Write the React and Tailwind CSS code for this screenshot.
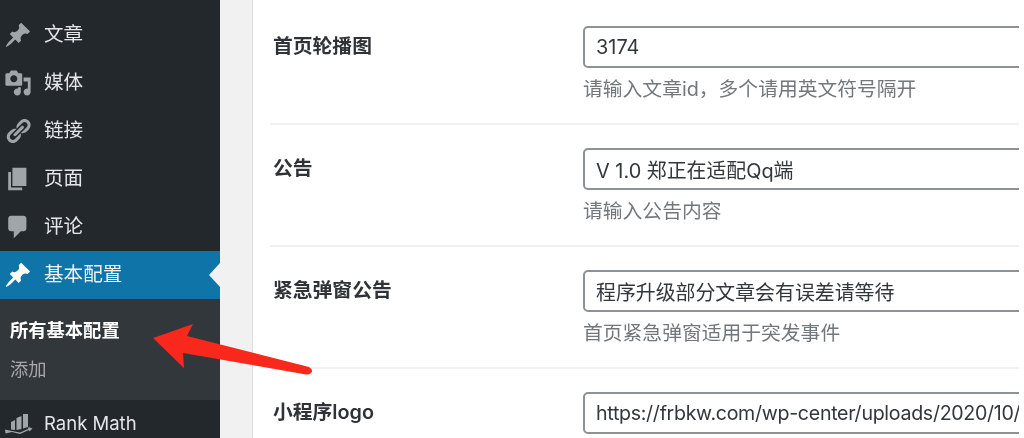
import React from 'react';

const PinIcon = ({ className }) => (
  <svg viewBox="0 0 20 20" fill="currentColor" className={className}>
    <path d="M10.44 3.02l1.82-1.82 6.36 6.35-1.83 1.82c-1.05-.68-2.48-.57-3.41.36l-.75.75c-.92.93-1.04 2.35-.35 3.41l-1.83 1.82-2.41-2.41-2.8 2.79c-.42.42-3.38 2.71-3.8 2.29s1.86-3.39 2.28-3.81l2.79-2.79L4.1 9.36l1.83-1.82c1.05.69 2.48.57 3.4-.36l.75-.75c.93-.92 1.04-2.35.36-3.41z" />
  </svg>
);

const MediaIcon = ({ className }) => (
  <svg viewBox="0 0 20 20" fill="currentColor" className={className}>
    <path d="M13 11V4c0-.55-.45-1-1-1h-1.67L9 1H5L3.67 3H2c-.55 0-1 .45-1 1v7c0 .55.45 1 1 1h10c.55 0 1-.45 1-1zM7 4.5c1.38 0 2.5 1.12 2.5 2.5S8.38 9.5 7 9.5 4.5 8.38 4.5 7 5.62 4.5 7 4.5zM14 6h5v10.5c0 1.38-1.12 2.5-2.5 2.5S14 17.88 14 16.5s1.12-2.5 2.5-2.5c.17 0 .34.02.5.05V9h-3V6zm-4 8.05V13h2v3.5c0 1.38-1.12 2.5-2.5 2.5S7 17.88 7 16.5 8.12 14 9.5 14c.17 0 .34.02.5.05z" />
  </svg>
);

const LinkIcon = ({ className }) => (
  <svg viewBox="0 0 20 20" fill="currentColor" className={className}>
    <path d="M17.74 2.76c1.68 1.69 1.68 4.41 0 6.1l-1.53 1.52c-1.12 1.12-2.7 1.47-4.14 1.09l2.62-2.61.76-.77.76-.76c.84-.84.84-2.2 0-3.04-.84-.85-2.2-.85-3.04 0l-.77.76-3.38 3.38c-.37-1.44-.02-3.02 1.1-4.14l1.52-1.53c1.69-1.68 4.42-1.68 6.1 0zM8.59 13.43l5.34-5.34c.42-.42.42-1.1 0-1.52-.44-.43-1.13-.39-1.53 0l-5.33 5.34c-.42.42-.42 1.1 0 1.52.44.43 1.13.39 1.52 0zm-.76 2.29l4.14-4.15c.38 1.44.03 3.02-1.09 4.14l-1.52 1.53c-1.69 1.68-4.41 1.68-6.1 0-1.68-1.68-1.68-4.42 0-6.1l1.53-1.52c1.12-1.12 2.7-1.47 4.14-1.1l-4.14 4.15c-.85.84-.85 2.2 0 3.05.84.84 2.2.84 3.04 0z" />
  </svg>
);

const PageIcon = ({ className }) => (
  <svg viewBox="0 0 20 20" fill="currentColor" className={className}>
    <path d="M6 15V2h10v13H6zm-1 1h8v2H3V5h2v11z" />
  </svg>
);

const CommentIcon = ({ className }) => (
  <svg viewBox="0 0 20 20" fill="currentColor" className={className}>
    <path d="M5 2h9c1.1 0 2 .9 2 2v7c0 1.1-.9 2-2 2h-2l-5 5v-5H5c-1.1 0-2-.9-2-2V4c0-1.1.9-2 2-2z" />
  </svg>
);

const RankMathIcon = ({ className }) => (
  <svg viewBox="0 0 28 20" fill="currentColor" className={className}>
    <path d="M18 0h5v13l-5 1.5zM11.500 4l5-2v13l-5 1zM6 8l4-2v10l-4-.5z" />
    <path d="M0 15.500l7 1.500 8 1.500 8-3.500 .5-2 4 1.500-3 3-.5-1.500-9 4-8-2-6.500 1.500z" />
  </svg>
);

const menuItems = [
  { label: '文章', Icon: PinIcon },
  { label: '媒体', Icon: MediaIcon },
  { label: '链接', Icon: LinkIcon },
  { label: '页面', Icon: PageIcon },
  { label: '评论', Icon: CommentIcon },
];

const fields = [
  { label: '首页轮播图', value: '3174', help: '请输入文章id，多个请用英文符号隔开' },
  { label: '公告', value: 'V 1.0 郑正在适配Qq端', help: '请输入公告内容' },
  { label: '紧急弹窗公告', value: '程序升级部分文章会有误差请等待', help: '首页紧急弹窗适用于突发事件' },
  { label: '小程序logo', value: 'https://frbkw.com/wp-center/uploads/2020/10/', tight: true },
];

const MenuItem = ({ label, Icon }) => (
  <div className="flex h-[48px] items-center text-[#e4e6e7]">
    <div className="ml-[4px] w-[40px] text-[#a0a5aa]">
      <Icon className="h-[28px] w-[28px]" />
    </div>
    <span className="text-[19.6px]">{label}</span>
  </div>
);

const Sidebar = () => (
  <aside className="w-[220px] shrink-0 bg-[#23282d] pt-[11px]">
    {menuItems.map((item) => (
      <MenuItem key={item.label} {...item} />
    ))}
    <div className="relative flex h-[48px] items-center bg-[#0f74a8] text-[#f1f1f1]">
      <div className="ml-[4px] w-[40px] text-white">
        <PinIcon className="h-[28px] w-[28px]" />
      </div>
      <span className="text-[19.6px]">基本配置</span>
      <div className="absolute right-0 top-[12px] h-0 w-0 border-y-[12px] border-r-[11px] border-y-transparent border-r-[#f1f1f1]" />
    </div>
    <div className="h-[101px] bg-[#32373c] pl-[10px] pt-[18px]">
      <div className="text-[18.3px] font-bold leading-[26px] text-white">所有基本配置</div>
      <div className="mt-[13px] text-[18.3px] leading-[26px] text-[#a5a9ad]">添加</div>
    </div>
    <div className="flex h-[48px] items-center text-[#e4e6e7]">
      <div className="ml-[5px] w-[39px] text-[#a0a5aa]">
        <RankMathIcon className="h-[20px] w-[28px]" />
      </div>
      <span className="text-[18.5px]">Rank Math</span>
    </div>
  </aside>
);

const FieldRow = ({ label, value, help, tight }) => (
  <div className="flex h-[122px] border-b-2 border-[#f1f1f1] pt-[23px]">
    <label className="w-[313px] shrink-0 pl-[3px] pt-[8px] text-[19.8px] font-semibold leading-[24px] text-[#2f3337]">
      {label}
    </label>
    <div className="shrink-0">
      <input
        readOnly
        value={value}
        className={`block h-[42px] w-[460px] rounded-[5px] border-2 border-[#8c9296] bg-white pl-[11px] text-[#32373c] outline-none ${tight ? 'text-[19.6px] tracking-[-0.3px]' : 'text-[19.9px]'}`}
      />
      {help && <p className="mt-[9px] text-[19.8px] leading-[24px] text-[#72777c]">{help}</p>}
    </div>
  </div>
);

const Arrow = () => (
  <svg viewBox="0 0 1024 438" className="pointer-events-none absolute left-0 top-0 h-[438px] w-[1024px]">
    <path
      d="M153 338L193 324L187 336L309 367Q314 370 311 373Q309 375 306 374.500L183 353L184 368Z"
      fill="#f8281c"
    />
  </svg>
);

export default function App() {
  return (
    <div className="relative flex h-[438px] w-[1024px] overflow-hidden bg-white blur-[0.4px] font-['Inter','Noto_Sans_CJK_SC',sans-serif]">
      <Sidebar />
      <main className="flex w-[799px] shrink-0 bg-[#f1f1f1] pl-[32px]">
        <div className="min-w-0 flex-1 overflow-hidden border-l border-[#dcdcdc] bg-white pl-[17px] pt-[3px]">
          {fields.map((field) => (
            <FieldRow key={field.label} {...field} />
          ))}
        </div>
      </main>
      <Arrow />
    </div>
  );
}
